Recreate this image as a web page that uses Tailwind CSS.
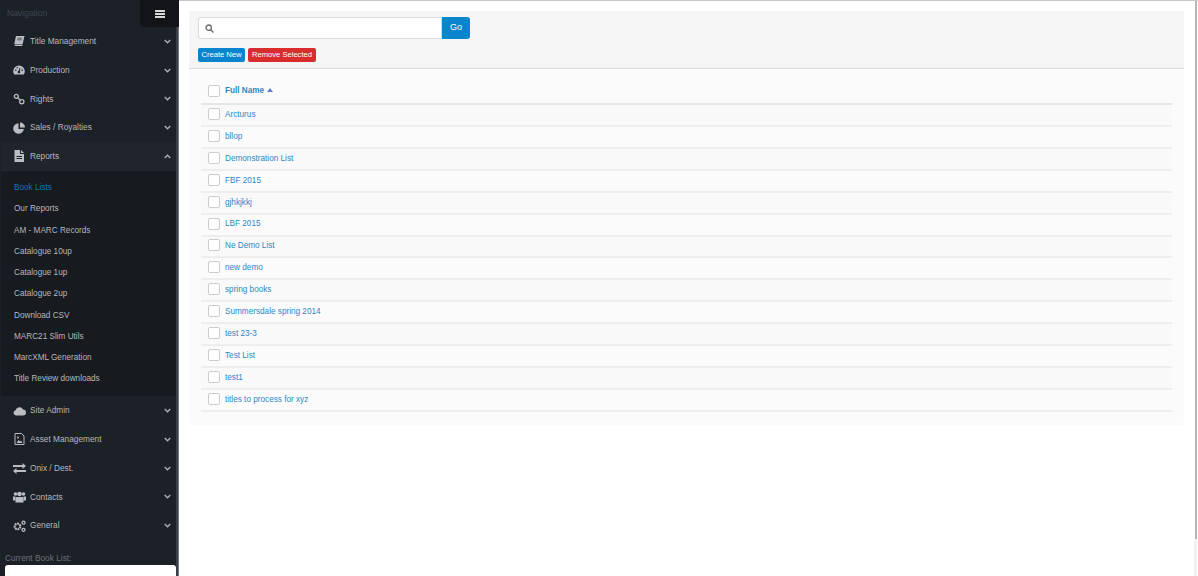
<!DOCTYPE html>
<html lang="en">
<head>
<meta charset="UTF-8">
<title>Book Lists</title>
<script src="https://cdn.jsdelivr.net/npm/@tailwindcss/browser@4"></script>
</head>
<body class="h-[576px] overflow-hidden bg-white font-['Liberation_Sans',Arial,sans-serif]">
<div class="flex h-[576px]">

  <!-- Sidebar -->
  <aside class="flex h-full w-[179px] shrink-0 overflow-hidden bg-[#1c2027]">
    <div class="flex w-[176px] shrink-0 flex-col pl-px">
      <div class="flex h-[27px] shrink-0 items-center justify-between">
        <span class="pl-[6px] text-[8.5px] text-[#3d4650]">Navigation</span>
        <span class="flex h-[27px] w-[36px] items-center justify-center rounded-bl bg-[#131417] pl-[3px]">
          <svg width="10" height="8" viewBox="0 0 10 8" fill="#d8d8d8"><rect width="10" height="2"/><rect y="3" width="10" height="2"/><rect y="6" width="10" height="2"/></svg>
        </span>
      </div>

      <a class="flex h-[28.75px] shrink-0 items-center pl-[12px] pr-[5px] text-[8.3px] text-[#b4b8bd]">
        <svg class="mr-[5px] w-[12px]" height="12" viewBox="0 0 12 12" fill="#b9bdc2"><path d="M3 1h8.500l-2 8.500H2.200q-.9 0-.9-1z"/><path d="M1.500 10h8l-.3 1H2.500q-1 0-1-1z"/><path d="M4.500 3.200h4.500M4.200 4.800h4.500" stroke="#1c2027" stroke-width=".6"/></svg>
        <span class="flex-1">Title Management</span>
        <svg width="7" height="5" viewBox="0 0 7 5" fill="none" stroke="#aeb2b7" stroke-width="1.300"><path d="M.7 1l2.800 2.800L6.300 1"/></svg>
      </a>
      <a class="flex h-[28.75px] shrink-0 items-center pl-[12px] pr-[5px] text-[8.3px] text-[#b4b8bd]">
        <svg class="mr-[5px] w-[12px]" height="12" viewBox="0 0 12 12" fill="#b9bdc2"><path d="M6 1.500a5.800 5.800 0 0 0-5.800 5.800q0 2 1 3.200h9.600q1-1.200 1-3.200A5.800 5.800 0 0 0 6 1.500z"/><circle cx="6" cy="8" r="1.300" fill="#1c2027"/><path d="M6 8l1-4" stroke="#1c2027"/><circle cx="2.800" cy="6.300" r=".8" fill="#1c2027"/><circle cx="9.200" cy="6.300" r=".8" fill="#1c2027"/><circle cx="4.300" cy="3.800" r=".7" fill="#1c2027"/></svg>
        <span class="flex-1">Production</span>
        <svg width="7" height="5" viewBox="0 0 7 5" fill="none" stroke="#aeb2b7" stroke-width="1.300"><path d="M.7 1l2.800 2.800L6.300 1"/></svg>
      </a>
      <a class="flex h-[28.75px] shrink-0 items-center pl-[12px] pr-[5px] text-[8.3px] text-[#b4b8bd]">
        <svg class="mr-[5px] w-[12px]" height="12" viewBox="0 0 12 12" fill="none" stroke="#b9bdc2" stroke-width="1.300"><circle cx="3.300" cy="3.300" r="2"/><circle cx="8.800" cy="8.800" r="2.100"/><path d="M4.800 4.800l2.500 2.500"/></svg>
        <span class="flex-1">Rights</span>
        <svg width="7" height="5" viewBox="0 0 7 5" fill="none" stroke="#aeb2b7" stroke-width="1.300"><path d="M.7 1l2.800 2.800L6.300 1"/></svg>
      </a>
      <a class="flex h-[28.75px] shrink-0 items-center pl-[12px] pr-[5px] text-[8.3px] text-[#b4b8bd]">
        <svg class="mr-[5px] w-[12px]" height="12" viewBox="0 0 12 12" fill="#b9bdc2"><path d="M5.500 1.200a5.300 5.300 0 1 0 5.300 5.800H5.500z"/><path d="M7 .5v5h5A5 5 0 0 0 7 .5z"/></svg>
        <span class="flex-1">Sales / Royalties</span>
        <svg width="7" height="5" viewBox="0 0 7 5" fill="none" stroke="#aeb2b7" stroke-width="1.300"><path d="M.7 1l2.800 2.800L6.300 1"/></svg>
      </a>
      <a class="flex h-[28.75px] shrink-0 items-center bg-[#20252c] pl-[12px] pr-[5px] text-[8.3px] text-[#b4b8bd]">
        <svg class="mr-[5px] w-[12px]" height="12" viewBox="0 0 12 12" fill="#b9bdc2"><path d="M1.500 0h5.500v4h4v8H1.500z"/><path d="M8 0l3 3H8z"/><path d="M3.500 6h5.500v1H3.500zM3.500 8h5.500v1H3.500z" fill="#20252c"/></svg>
        <span class="flex-1">Reports</span>
        <svg width="7" height="5" viewBox="0 0 7 5" fill="none" stroke="#aeb2b7" stroke-width="1.300"><path d="M.7 4l2.800-2.800L6.300 4"/></svg>
      </a>

      <div class="flex shrink-0 flex-col bg-[#171a1f] pb-[6px] pl-[13px] pt-[7px] text-[8.2px] text-[#b4b8bd]">
        <a class="flex h-[21.25px] items-center text-[#0a78bd]">Book Lists</a>
        <a class="flex h-[21.25px] items-center">Our Reports</a>
        <a class="flex h-[21.25px] items-center">AM - MARC Records</a>
        <a class="flex h-[21.25px] items-center">Catalogue 10up</a>
        <a class="flex h-[21.25px] items-center">Catalogue 1up</a>
        <a class="flex h-[21.25px] items-center">Catalogue 2up</a>
        <a class="flex h-[21.25px] items-center">Download CSV</a>
        <a class="flex h-[21.25px] items-center">MARC21 Slim Utils</a>
        <a class="flex h-[21.25px] items-center">MarcXML Generation</a>
        <a class="flex h-[21.25px] items-center">Title Review downloads</a>
      </div>

      <a class="flex h-[28.75px] shrink-0 items-center pl-[12px] pr-[5px] text-[8.3px] text-[#b4b8bd]">
        <svg class="mr-[4px] w-[13px]" height="12" viewBox="0 0 13 12" fill="#b9bdc2"><path d="M3 10.500a2.700 2.700 0 0 1-.5-5.300A4 4 0 0 1 10 4.500a3 3 0 0 1 0 6z"/></svg>
        <span class="flex-1">Site Admin</span>
        <svg width="7" height="5" viewBox="0 0 7 5" fill="none" stroke="#aeb2b7" stroke-width="1.300"><path d="M.7 1l2.800 2.800L6.300 1"/></svg>
      </a>
      <a class="flex h-[28.75px] shrink-0 items-center pl-[12px] pr-[5px] text-[8.3px] text-[#b4b8bd]">
        <svg class="mr-[4px] w-[13px]" height="12" viewBox="0 0 13 12" fill="none" stroke="#b9bdc2"><path d="M2 .5h6.500L11 3v8.500H2z"/><path d="M3.500 10l2-3 1.500 1.500L8 7.500l1.500 2.500z" fill="#b9bdc2" stroke="none"/><circle cx="5" cy="4.500" r="1" fill="#b9bdc2" stroke="none"/></svg>
        <span class="flex-1">Asset Management</span>
        <svg width="7" height="5" viewBox="0 0 7 5" fill="none" stroke="#aeb2b7" stroke-width="1.300"><path d="M.7 1l2.800 2.800L6.300 1"/></svg>
      </a>
      <a class="flex h-[28.75px] shrink-0 items-center pl-[12px] pr-[5px] text-[8.3px] text-[#b4b8bd]">
        <svg class="mr-[4px] w-[13px]" height="12" viewBox="0 0 13 12" fill="#b9bdc2"><path d="M0 3h9.500V1L13 4 9.500 7V5H0z"/><path d="M13 8H3.500V6L0 9l3.500 3v-2H13z"/></svg>
        <span class="flex-1">Onix / Dest.</span>
        <svg width="7" height="5" viewBox="0 0 7 5" fill="none" stroke="#aeb2b7" stroke-width="1.300"><path d="M.7 1l2.800 2.800L6.300 1"/></svg>
      </a>
      <a class="flex h-[28.75px] shrink-0 items-center pl-[12px] pr-[5px] text-[8.3px] text-[#b4b8bd]">
        <svg class="mr-[4px] w-[13px]" height="12" viewBox="0 0 13 12" fill="#b9bdc2"><circle cx="6.500" cy="3" r="2.300"/><circle cx="2.500" cy="3" r="1.800"/><circle cx="10.500" cy="3" r="1.800"/><path d="M3.500 6h6q1 0 1 1.500v4h-8v-4q0-1.500 1-1.500z"/><path d="M0 5.500h2.500v4H0zM10.500 5.500H13v4h-2.500z"/></svg>
        <span class="flex-1">Contacts</span>
        <svg width="7" height="5" viewBox="0 0 7 5" fill="none" stroke="#aeb2b7" stroke-width="1.300"><path d="M.7 1l2.800 2.800L6.300 1"/></svg>
      </a>
      <a class="flex h-[28.75px] shrink-0 items-center pl-[12px] pr-[5px] text-[8.3px] text-[#b4b8bd]">
        <svg class="mr-[4px] w-[13px]" height="12" viewBox="0 0 13 12" fill="none" stroke="#b9bdc2"><circle cx="4.500" cy="6.500" r="2.800" stroke-width="2.200" stroke-dasharray="1.800 .7"/><circle cx="10.500" cy="2.700" r="1.500" stroke-width="1.300"/><circle cx="10.500" cy="9.800" r="1.500" stroke-width="1.300"/></svg>
        <span class="flex-1">General</span>
        <svg width="7" height="5" viewBox="0 0 7 5" fill="none" stroke="#aeb2b7" stroke-width="1.300"><path d="M.7 1l2.800 2.800L6.300 1"/></svg>
      </a>

      <div class="mt-[13px] shrink-0 pl-1 text-[8.3px] leading-[11px] text-[#6c7178]">Current Book List:</div>
      <div class="ml-1 mt-[1px] h-[20px] shrink-0 rounded-t-[3px] bg-white"></div>
    </div>
    <!-- thin strip between sidebar and page, the toggle button runs over its top -->
    <div class="flex w-[3px] shrink-0 flex-col">
      <div class="h-[27px] bg-[#131417]"></div>
      <div class="flex-1 border-r border-[#7a7a7a] bg-[#3a3e47]"></div>
    </div>
  </aside>

  <!-- Main -->
  <main class="relative min-w-0 flex-1 border-t border-[#c8c8c8] pl-[10px] pr-[14px] pt-[10px]">
    <section class="rounded-[3px] bg-[#fbfbfb] pb-[13px]">
      <div class="border-b border-[#dddddd] bg-[#f5f5f5] px-[9px] pb-[6px] pt-[6px]">
        <div class="flex h-[22px] w-[272px]">
          <div class="flex flex-1 items-center rounded-l-[3px] border border-[#dadada] bg-white pl-[6px]">
            <svg width="9" height="9" viewBox="0 0 9 9" fill="none" stroke="#6f6a66" stroke-width="1.300"><circle cx="3.700" cy="3.700" r="2.700"/><path d="M5.700 5.700L8.500 8.500"/></svg>
          </div>
          <button class="w-[28px] rounded-r-[3px] bg-[#0a84cc] text-[9px] text-white">Go</button>
        </div>
        <div class="mt-[9px] flex gap-[3px]">
          <button class="h-[14px] w-[47px] rounded-[2px] bg-[#0a84cc] text-[7.6px] font-medium leading-[14px] text-white">Create New</button>
          <button class="h-[14px] w-[68px] rounded-[2px] bg-[#d92d2d] text-[7.6px] font-medium leading-[14px] text-white">Remove Selected</button>
        </div>
      </div>

      <div class="mx-[12px] text-[8.2px] text-[#2b88c6]">
        <div class="flex h-[36px] items-center border-b-2 border-[#e6e6e6] pl-[7px] pt-[10px] font-bold">
          <span class="mr-[5px] size-[12px] rounded-[2px] border border-[#cccccc] bg-white"></span>Full Name
          <svg class="mb-[2px] ml-[3px]" width="6" height="4" viewBox="0 0 6 4" fill="#5f7fd6"><path d="M3 0l3 4H0z"/></svg>
        </div>
        <div class="flex h-[21.93px] items-center border-b-2 border-[#eeeeee] bg-[#f9f9f9] pl-[7px]"><span class="mb-[2px] mr-[5px] size-[12px] rounded-[2px] border border-[#cccccc] bg-white"></span>Arcturus</div>
        <div class="flex h-[21.93px] items-center border-b-2 border-[#eeeeee] pl-[7px]"><span class="mb-[2px] mr-[5px] size-[12px] rounded-[2px] border border-[#cccccc] bg-white"></span>bllop</div>
        <div class="flex h-[21.93px] items-center border-b-2 border-[#eeeeee] bg-[#f9f9f9] pl-[7px]"><span class="mb-[2px] mr-[5px] size-[12px] rounded-[2px] border border-[#cccccc] bg-white"></span>Demonstration List</div>
        <div class="flex h-[21.93px] items-center border-b-2 border-[#eeeeee] pl-[7px]"><span class="mb-[2px] mr-[5px] size-[12px] rounded-[2px] border border-[#cccccc] bg-white"></span>FBF 2015</div>
        <div class="flex h-[21.93px] items-center border-b-2 border-[#eeeeee] bg-[#f9f9f9] pl-[7px]"><span class="mb-[2px] mr-[5px] size-[12px] rounded-[2px] border border-[#cccccc] bg-white"></span>gjhkjkkj</div>
        <div class="flex h-[21.93px] items-center border-b-2 border-[#eeeeee] pl-[7px]"><span class="mb-[2px] mr-[5px] size-[12px] rounded-[2px] border border-[#cccccc] bg-white"></span>LBF 2015</div>
        <div class="flex h-[21.93px] items-center border-b-2 border-[#eeeeee] bg-[#f9f9f9] pl-[7px]"><span class="mb-[2px] mr-[5px] size-[12px] rounded-[2px] border border-[#cccccc] bg-white"></span>Ne Demo List</div>
        <div class="flex h-[21.93px] items-center border-b-2 border-[#eeeeee] pl-[7px]"><span class="mb-[2px] mr-[5px] size-[12px] rounded-[2px] border border-[#cccccc] bg-white"></span>new demo</div>
        <div class="flex h-[21.93px] items-center border-b-2 border-[#eeeeee] bg-[#f9f9f9] pl-[7px]"><span class="mb-[2px] mr-[5px] size-[12px] rounded-[2px] border border-[#cccccc] bg-white"></span>spring books</div>
        <div class="flex h-[21.93px] items-center border-b-2 border-[#eeeeee] pl-[7px]"><span class="mb-[2px] mr-[5px] size-[12px] rounded-[2px] border border-[#cccccc] bg-white"></span>Summersdale spring 2014</div>
        <div class="flex h-[21.93px] items-center border-b-2 border-[#eeeeee] bg-[#f9f9f9] pl-[7px]"><span class="mb-[2px] mr-[5px] size-[12px] rounded-[2px] border border-[#cccccc] bg-white"></span>test 23-3</div>
        <div class="flex h-[21.93px] items-center border-b-2 border-[#eeeeee] pl-[7px]"><span class="mb-[2px] mr-[5px] size-[12px] rounded-[2px] border border-[#cccccc] bg-white"></span>Test List</div>
        <div class="flex h-[21.93px] items-center border-b-2 border-[#eeeeee] bg-[#f9f9f9] pl-[7px]"><span class="mb-[2px] mr-[5px] size-[12px] rounded-[2px] border border-[#cccccc] bg-white"></span>test1</div>
        <div class="flex h-[21.93px] items-center border-b-2 border-[#eeeeee] pl-[7px]"><span class="mb-[2px] mr-[5px] size-[12px] rounded-[2px] border border-[#cccccc] bg-white"></span>titles to process for xyz</div>
      </div>
    </section>
    <!-- window scrollbar -->
    <div class="absolute right-px top-0 h-[538px] w-[2px] bg-[#b5b5b5]"></div>
    <div class="absolute right-px top-[538px] h-[38px] w-[3px] bg-[#f1f1f1]"></div>
  </main>
</div>
</body>
</html>
